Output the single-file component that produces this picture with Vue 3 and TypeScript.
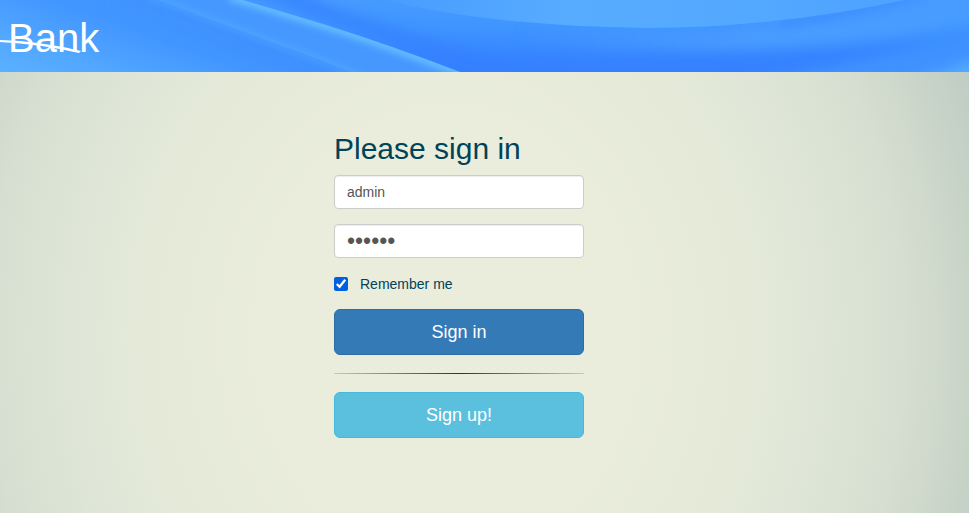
<script setup lang="ts">
import { ref } from 'vue'

const username = ref<string>('admin')
const password = ref<string>('secret')
const remember = ref<boolean>(true)
</script>

<template>
  <div class="page">
    <header class="banner">
      <svg class="waves" viewBox="0 0 969 72" preserveAspectRatio="none" aria-hidden="true">
        <defs>
          <linearGradient id="left" gradientUnits="userSpaceOnUse" x1="90" y1="110" x2="130" y2="-4">
            <stop offset="0" stop-color="#5cb2ff" />
            <stop offset="0.35" stop-color="#52a7ff" />
            <stop offset="0.75" stop-color="#4296ff" />
            <stop offset="1" stop-color="#4194ff" />
          </linearGradient>
          <linearGradient id="fold" gradientUnits="userSpaceOnUse" x1="120" y1="0" x2="330" y2="0">
            <stop offset="0" stop-color="#3d8fff" stop-opacity="0.1" />
            <stop offset="1" stop-color="#3f91ff" />
          </linearGradient>
          <linearGradient id="deep" x1="0" y1="0" x2="0" y2="1">
            <stop offset="0" stop-color="#479bff" />
            <stop offset="0.4" stop-color="#3f94ff" />
            <stop offset="0.8" stop-color="#3784ff" />
            <stop offset="1" stop-color="#367fff" />
          </linearGradient>
          <linearGradient id="ring" gradientUnits="userSpaceOnUse" x1="520" y1="0" x2="760" y2="0">
            <stop offset="0" stop-color="#4a9cff" stop-opacity="0" />
            <stop offset="1" stop-color="#4a9cff" />
          </linearGradient>
          <linearGradient id="dome" x1="0" y1="0" x2="1" y2="0">
            <stop offset="0" stop-color="#479cff" />
            <stop offset="0.35" stop-color="#58acff" />
            <stop offset="0.6" stop-color="#55aaff" />
            <stop offset="1" stop-color="#4ea2ff" />
          </linearGradient>
          <clipPath id="bandClip">
            <path d="M158 0 H243 L323 24 Q390 45 460 72 H350 L323 61 Z" />
          </clipPath>
          <clipPath id="leftClip">
            <path d="M0 0 H158 L323 61 L350 72 H0 Z" />
          </clipPath>
          <filter id="soft" x="-20%" y="-60%" width="140%" height="220%">
            <feGaussianBlur stdDeviation="6" />
          </filter>
          <filter id="glow" x="-20%" y="-60%" width="140%" height="220%">
            <feGaussianBlur stdDeviation="3" />
          </filter>
        </defs>
        <rect width="969" height="72" fill="url(#deep)" />
        <path d="M225 -14 L480 76 H560 Q440 44 330 6 L290 -14 Z" fill="#3580ff" opacity="0.7" filter="url(#soft)" />
        <path d="M500 22 Q780 50 1000 -16 V14 Q810 64 500 44 Z" fill="url(#ring)" filter="url(#soft)" />
        <path d="M720 84 Q880 62 1000 26 V84 Z" fill="#4092ff" filter="url(#soft)" />
        <path d="M900 84 Q945 72 1000 50 V84 Z" fill="#55aaff" filter="url(#soft)" />
        <path d="M780 24 Q860 12 925 -6" fill="none" stroke="#3c8dff" stroke-width="10" opacity="0.6" filter="url(#glow)" />
        <path d="M385 0 Q490 26 646 28 Q774 28 905 0 Z" fill="url(#dome)" />
        <path d="M0 0 H158 L323 61 L350 72 H0 Z" fill="url(#left)" />
        <g clip-path="url(#leftClip)">
          <path d="M110 -10 L340 76" fill="none" stroke="url(#fold)" stroke-width="34" filter="url(#soft)" />
          <path d="M148 -4 L356 74" fill="none" stroke="#4ea4ff" stroke-width="5" opacity="0.7" filter="url(#glow)" />
        </g>
        <path d="M158 0 H243 L323 24 Q390 45 460 72 H350 L323 61 Z" fill="#4698ff" />
        <g clip-path="url(#bandClip)">
          <path d="M147 -4 L323 61 L361 76" fill="none" stroke="#50a7ff" stroke-width="5" filter="url(#glow)" />
          <path d="M230 -4 L323 24 Q390 45 470 76" fill="none" stroke="#64bbff" stroke-width="10" filter="url(#glow)" />
        </g>
      </svg>
      <a class="brand" href="#">
        Bank
        <svg class="swoosh" viewBox="0 0 82 16" aria-hidden="true">
          <path d="M0 3 Q40 4 81 14 L79 16 Q40 7 0 5 Z" fill="#fff" />
        </svg>
      </a>
    </header>

    <main class="content">
      <form class="signin" @submit.prevent>
        <h1>Please sign in</h1>
        <input v-model="username" class="field" type="text" aria-label="Username" />
        <input v-model="password" class="field password" type="password" aria-label="Password" />
        <label class="remember">
          <input v-model="remember" type="checkbox" />
          <span>Remember me</span>
        </label>
        <button class="btn primary" type="submit">Sign in</button>
        <hr />
        <button class="btn info" type="button">Sign up!</button>
      </form>
    </main>
  </div>
</template>

<style>
body {
  margin: 0;
}
</style>

<style scoped>
.page {
  display: flex;
  flex-direction: column;
  min-height: 100vh;
  font-family: "Liberation Sans", Arial, sans-serif;
  font-size: 14px;
  line-height: 20px;
  color: #004358;
}

.banner {
  position: relative;
  height: 72px;
  overflow: hidden;
}

.waves {
  position: absolute;
  inset: 0;
  width: 100%;
  height: 100%;
}

.brand {
  position: relative;
  display: inline-block;
  padding: 16px 8px;
  color: #fff;
  font-size: 40px;
  line-height: 44px;
  text-decoration: none;
}

.swoosh {
  position: absolute;
  left: 0;
  top: 37px;
  width: 82px;
  height: 16px;
}

.content {
  flex: 1;
  display: flex;
  justify-content: center;
  align-items: flex-start;
  padding: 60px 51px 60px 0;
  background: radial-gradient(
    ellipse 54% 140% at 46% 60%,
    #eaeddc 34%,
    #e6ead9 54%,
    #dfe6d7 72%,
    #d5ded0 88%,
    #c9d4c8 100%,
    #bfccc4 109%
  );
}

.signin {
  display: flex;
  flex-direction: column;
  width: 250px;
}

h1 {
  margin: 0 0 10px;
  font-size: 30px;
  font-weight: 400;
  line-height: 33px;
}

.field {
  box-sizing: border-box;
  width: 100%;
  height: 34px;
  margin: 0 0 15px;
  padding: 6px 12px;
  border: 1px solid #ccc;
  border-radius: 4px;
  background: #fff;
  box-shadow: inset 0 1px 1px rgba(0, 0, 0, 0.075);
  color: #555;
  font: inherit;
}

.password {
  font-size: 23px;
}

.remember {
  display: flex;
  align-items: center;
  align-self: flex-start;
  gap: 12px;
  margin: 1px 0 15px;
}

.remember input {
  width: 14px;
  height: 14px;
  margin: 0;
  accent-color: #0060df;
}

.btn {
  box-sizing: border-box;
  width: 100%;
  height: 46px;
  padding: 10px 16px;
  border: 1px solid;
  border-radius: 6px;
  color: #fff;
  font: inherit;
  font-size: 18px;
  line-height: 24px;
  cursor: pointer;
}

.primary {
  background: #337ab7;
  border-color: #2e6da4;
}

.info {
  background: #5bc0de;
  border-color: #46b8da;
}

hr {
  width: 100%;
  height: 1px;
  margin: 18px 0;
  border: 0;
  background: linear-gradient(90deg, #c6c8bc, #33342f 50%, #c6c8bc);
}
</style>
